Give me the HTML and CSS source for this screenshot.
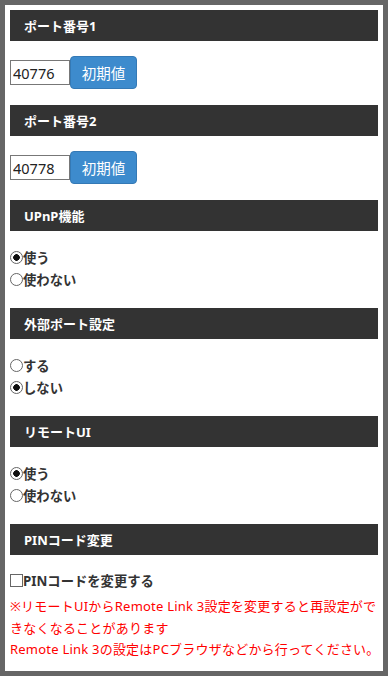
FILE: index.html
```html
<!DOCTYPE html>
<html lang="ja">
<head>
<meta charset="utf-8">
<link rel="stylesheet" href="styles.css">
</head>
<body>
<div class="page">
  <div class="hdr">ポート番号1</div>
  <div class="row">
    <input class="num" type="text" value="40776">
    <button class="btn" type="button">初期値</button>
  </div>

  <div class="hdr">ポート番号2</div>
  <div class="row">
    <input class="num" type="text" value="40778">
    <button class="btn" type="button">初期値</button>
  </div>

  <div class="hdr">UPnP機能</div>
  <div class="opts">
    <label class="opt"><input type="radio" name="upnp" checked>使う</label>
    <label class="opt"><input type="radio" name="upnp">使わない</label>
  </div>

  <div class="hdr">外部ポート設定</div>
  <div class="opts">
    <label class="opt"><input type="radio" name="ext">する</label>
    <label class="opt"><input type="radio" name="ext" checked>しない</label>
  </div>

  <div class="hdr">リモートUI</div>
  <div class="opts">
    <label class="opt"><input type="radio" name="rui" checked>使う</label>
    <label class="opt"><input type="radio" name="rui">使わない</label>
  </div>

  <div class="hdr">PINコード変更</div>
  <div class="pin">
    <label class="opt"><input type="checkbox">PINコードを変更する</label>
    <p class="warn">※リモートUIからRemote Link 3設定を変更すると再設定ができなくなることがあります<br><span class="nw">Remote Link 3の設定はPCブラウザなどから行ってください。</span></p>
  </div>
</div>
</body>
</html>
```

FILE: styles.css
```css
html, body {
  margin: 0;
  padding: 0;
  background: #666;
}
body {
  font-family: "Noto Sans", "Noto Sans CJK JP", sans-serif;
}
.page {
  box-sizing: border-box;
  width: 388px;
  height: 676px;
  border: 5px solid #666;
  padding: 5px;
  background: #fff;
  overflow: hidden;
}
.hdr {
  height: 31px;
  background: #333;
  color: #fff;
  font-size: 13px;
  font-weight: bold;
  padding-left: 14px;
  display: flex;
  align-items: center;
}
.row {
  display: flex;
  align-items: center;
  margin: 15px 0 16px;
}
.num {
  box-sizing: border-box;
  width: 60px;
  height: 25px;
  margin: 0;
  border: 1px solid #777;
  padding: 0 2px;
  font-family: "Noto Sans", sans-serif;
  font-size: 14.5px;
  color: #222;
  outline: none;
}
.btn {
  box-sizing: border-box;
  width: 67px;
  height: 33px;
  margin: 0;
  background: #3d8bcd;
  border: 1px solid #3479b5;
  border-radius: 4px;
  color: #fff;
  font-family: "Noto Sans CJK JP", sans-serif;
  font-size: 14.5px;
  padding: 0;
}
.opts {
  margin: 15px 0 18px;
}
.opt {
  display: flex;
  align-items: center;
  height: 22px;
  font-size: 13.33px;
  font-weight: bold;
  color: #333;
}
.opt input {
  appearance: none;
  -webkit-appearance: none;
  box-sizing: border-box;
  width: 13px;
  height: 13px;
  margin: 0;
  border: 1px solid #666;
  background: #fff;
}
.opt input[type="radio"] {
  border-radius: 50%;
}
.opt input[type="radio"]:checked {
  background: radial-gradient(circle, #111 0 3px, #fff 3.6px);
}
.pin {
  margin-top: 14px;
}
.warn {
  margin: 5px 0 0;
  color: #f00;
  font-size: 13px;
  letter-spacing: 0.22px;
  line-height: 21.5px;
}
.nw {
  white-space: nowrap;
}
```
